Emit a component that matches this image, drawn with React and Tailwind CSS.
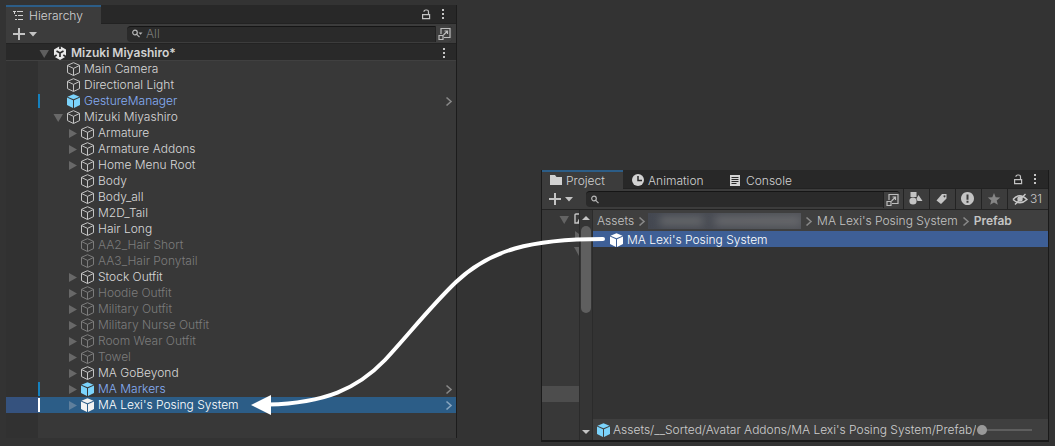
import React from "react";

const TREE = [
  { name: "Main Camera", depth: 0 },
  { name: "Directional Light", depth: 0 },
  { name: "GestureManager", depth: 0, prefab: true },
  { name: "Mizuki Miyashiro", depth: 0, fold: "open" },
  { name: "Armature", depth: 1, fold: "closed" },
  { name: "Armature Addons", depth: 1, fold: "closed" },
  { name: "Home Menu Root", depth: 1, fold: "closed" },
  { name: "Body", depth: 1 },
  { name: "Body_all", depth: 1 },
  { name: "M2D_Tail", depth: 1 },
  { name: "Hair Long", depth: 1 },
  { name: "AA2_Hair Short", depth: 1, off: true },
  { name: "AA3_Hair Ponytail", depth: 1, off: true },
  { name: "Stock Outfit", depth: 1, fold: "closed" },
  { name: "Hoodie Outfit", depth: 1, fold: "closed", off: true },
  { name: "Military Outfit", depth: 1, fold: "closed", off: true },
  { name: "Military Nurse Outfit", depth: 1, fold: "closed", off: true },
  { name: "Room Wear Outfit", depth: 1, fold: "closed", off: true },
  { name: "Towel", depth: 1, fold: "closed", off: true },
  { name: "MA GoBeyond", depth: 1, fold: "closed" },
  { name: "MA Markers", depth: 1, fold: "closed", prefab: true },
  { name: "MA Lexi's Posing System", depth: 1, fold: "closed", prefab: true, selected: true },
];

function Cube({ className = "" }) {
  return (
    <svg className={"size-4 shrink-0 " + className} viewBox="0 0 16 16" fill="none" stroke="currentColor" strokeWidth="1" strokeLinejoin="round" aria-hidden="true">
      <path d="M7.500 1.700 13.500 4.300V11.600L7.500 14.500 1.500 11.600V4.300Z" />
      <path d="M1.500 4.500 7.500 7.400 13.500 4.500M7.500 7.400V14.300" />
    </svg>
  );
}

function SolidCube({ className = "" }) {
  return (
    <svg className={"size-4 shrink-0 " + className} viewBox="0 0 16 16" fill="currentColor" aria-hidden="true">
      <path d="M7.500 1.200 13.500 3.700 7.500 6.300 1.500 3.700Z" />
      <path d="M1 4.600 7 7.200V14.900L1 12Z" />
      <path d="M14 4.600 8 7.200V14.900L14 12Z" />
    </svg>
  );
}

function Fold({ open, className = "" }) {
  return (
    <svg className={"h-4 w-3.5 shrink-0 " + className} viewBox="0 0 14 16" fill="currentColor" aria-hidden="true">
      {open ? <path d="M1.500 5h9.500L6.200 13Z" /> : <path d="M3 4v9l8-4.500Z" />}
    </svg>
  );
}

function Chevron({ className = "" }) {
  return (
    <svg className={"h-4 w-2 shrink-0 " + className} viewBox="0 0 8 16" fill="none" stroke="currentColor" strokeWidth="1.6" aria-hidden="true">
      <path d="M1.500 4.500 6 8.500 1.500 12.500" />
    </svg>
  );
}

function Lock() {
  return (
    <svg className="h-4 w-3" viewBox="0 0 12 16" fill="none" stroke="currentColor" strokeWidth="1.2" aria-hidden="true">
      <path d="M1.600 8.600h7v4h-7zM3 5.800V5.200Q3.200 4 4.700 4h1Q7.500 4 7.500 5.700V8.500" />
    </svg>
  );
}

function Dots() {
  return (
    <svg className="h-4 w-2" viewBox="0 0 8 16" fill="currentColor" aria-hidden="true">
      <path d="M3 3h2v2H3zM3 7h2v2H3zM3 11h2v2H3z" />
    </svg>
  );
}

function AddButton() {
  return (
    <button type="button" aria-label="Create" className="flex text-[#c4c4c4]">
      <svg className="h-4 w-7" viewBox="0 0 28 16" fill="currentColor" aria-hidden="true">
        <path d="M8 2h2v5h5v2h-5v5H8V9H3V7h5zM19 6h8l-4 4.500z" />
      </svg>
    </button>
  );
}

function SearchGlyph({ menu }) {
  return (
    <svg className="h-4 w-3 shrink-0 text-[#b8b8b8]" viewBox="0 0 12 16" fill="none" stroke="currentColor" strokeWidth="1.2" aria-hidden="true">
      <circle cx="4" cy="6.500" r="2.300" />
      <path d="M5.700 8.300 8.500 11.200" />
      {menu && <path d="M7.500 6.500h4L9.500 8.800Z" fill="currentColor" stroke="none" />}
    </svg>
  );
}

function OpenSearch() {
  return (
    <button type="button" aria-label="Open search window" className="flex h-4 w-[17px] items-center justify-end rounded-r-sm border-l border-[#222] bg-[#404040] text-[#bdbdbd]">
      <svg className="size-3.5" viewBox="0 0 14 14" fill="none" stroke="currentColor" strokeWidth="1.200" aria-hidden="true">
        <path d="M3 7V1.500h9v9H6M1 8.500h4v4h-4zM5.500 8l4-4M6.500 4h3v3" />
      </svg>
    </button>
  );
}

function Hierarchy() {
  return (
    <section className="flex flex-col border-r border-[#1c1c1c] bg-[#383838]">
      <header className="flex h-[19px] items-stretch border-b border-[#222] bg-[#282828]">
        <button type="button" className="-mb-px flex w-[95px] items-center gap-1.5 border-t-2 border-[#2c5d87] bg-[#3c3c3c] pl-[7px] text-[#d2d2d2]">
          <svg className="h-3 w-2.5" viewBox="0 0 10 12" fill="currentColor" aria-hidden="true">
            <path d="M0 1h3v1H0zM1 2h1v2H1zM4 1h6v1H4zM2 5h2v1H2zM5 5h5v1H5zM2 9h2v1H2zM5 9h5v1H5z" />
          </svg>
          Hierarchy
        </button>
        <div className="ml-auto flex items-center gap-1.5 pr-[9px] text-[#c4c4c4]">
          <button type="button" aria-label="Lock"><Lock /></button>
          <button type="button" aria-label="Panel menu"><Dots /></button>
        </div>
      </header>
      <div className="flex h-5 items-center justify-between border-b border-[#232323] bg-[#3c3c3c] pl-1 pr-1">
        <AddButton />
        <div className="flex h-4 w-[325px] items-center rounded-sm border-t border-[#151515] bg-[#2a2a2a] pl-1">
          <SearchGlyph menu />
          <input aria-label="Search hierarchy" placeholder="All" className="ml-[3px] w-0 grow bg-transparent text-xs outline-none placeholder:text-[#7c7c7c]" />
          <OpenSearch />
        </div>
      </div>
      <div className="flex h-[17px] items-center border-b border-[#404040] bg-[#292929] pl-8 pr-2 pt-px font-semibold text-[#d2d2d2]">
        <Fold open className="text-[#5e5e5e]" />
        <svg className="mr-[3px] size-4" viewBox="0 0 16 16" aria-hidden="true">
          <path d="M8 1 14 4.400V11.600L8 15 2 11.600V4.400Z" fill="#e8e8e8" />
          <path d="M8 8 4.500 6M8 8l3.500-2M8 8v4M8 .5v3.500M1.500 12l3.200-2M14.500 12l-3.200-2" stroke="#292929" strokeWidth="1.700" />
        </svg>
        <span>Mizuki Miyashiro*</span>
        <button type="button" aria-label="Scene menu" className="ml-auto text-[#c4c4c4]"><Dots /></button>
      </div>
      <ul className="text-[#d8d8d8]">
        {TREE.map((n) => (
          <li key={n.name} className={"flex h-4 items-center " + (n.selected ? "bg-[#2c5d87] text-white" : n.off ? "text-[#7c7c7c]" : n.prefab ? "text-[#86aef6]" : "")}>
            <span className={"h-4 w-8 " + (n.selected ? "bg-[#35527e]" : "bg-[#313131]")} />
            <span className={"h-3.5 w-0.5 " + (n.selected ? "bg-white" : n.prefab ? "bg-[#1580bd]" : "")} />
            <span className={n.depth ? "w-[26px]" : "w-3"} />
            {n.fold ? <Fold open={n.fold === "open"} className={n.selected ? "text-[#5f7f9c]" : "text-[#686868]"} /> : <span className="w-3.5" />}
            {n.prefab ? <SolidCube className={n.selected ? "text-[#f2f2f2]" : "text-[#7bd3fb]"} /> : <Cube className={n.off ? "" : "text-[#c4c4c4]"} />}
            <span className="ml-0.5 whitespace-nowrap">{n.name}</span>
            {n.prefab && <Chevron className={"ml-auto mr-[3px] " + (n.selected ? "text-[#88a5bf]" : "text-[#888]")} />}
          </li>
        ))}
      </ul>
      <div className="flex h-[25px]"><span className="w-8 bg-[#313131]" /></div>
    </section>
  );
}

function Tool({ label, children }) {
  return (
    <button type="button" aria-label={label} className="flex h-5 w-[26px] shrink-0 items-center justify-center border-l border-[#232323] pr-0.5 text-[#c4c4c4]">
      <svg className="size-4" viewBox="0 0 16 16" fill="currentColor" aria-hidden="true">{children}</svg>
    </button>
  );
}

function Project() {
  return (
    <section className="mt-[165px] flex h-[272px] min-w-0 flex-col border-x border-b-2 border-[#1a1a1a] bg-[#333]">
      <header className="flex h-[19px] shrink-0 items-stretch border-b border-[#222] bg-[#282828] text-[#d2d2d2]">
        <button type="button" className="-mb-px flex w-[81px] items-center gap-1 border-t-2 border-[#2c5d87] bg-[#3c3c3c] pl-2">
          <svg className="h-3 w-3" viewBox="0 0 12 12" fill="currentColor" aria-hidden="true"><path d="M0 0h5l1.500 2H12v8H0z" /></svg>
          Project
        </button>
        <button type="button" className="flex w-[98px] items-center gap-[3px] pl-2 pt-1">
          <svg className="h-3.5 w-3.5" viewBox="0 0 14 14" aria-hidden="true"><circle cx="7" cy="6" r="6" fill="currentColor" /><path d="M7 2V6.500h4" fill="none" stroke="#282828" strokeWidth="1.500" /></svg>
          Animation
        </button>
        <button type="button" className="flex items-center gap-[5px] pl-2 pt-1">
          <svg className="h-3 w-3" viewBox="0 0 12 12" aria-hidden="true"><path d="M1 0h10v11H1z" fill="currentColor" /><path d="M2.500 2.500h7M2.500 4.500h7M2.500 6.500h7M2.500 8.500h5" stroke="#282828" /></svg>
          Console
        </button>
        <div className="ml-auto flex items-center gap-1.5 pr-[9px] text-[#c4c4c4]">
          <button type="button" aria-label="Lock"><Lock /></button>
          <button type="button" aria-label="Panel menu"><Dots /></button>
        </div>
      </header>
      <div className="flex h-[21px] shrink-0 items-center border-b border-[#232323] bg-[#3c3c3c] pl-1">
        <AddButton />
        <div className="ml-3 mr-[3px] flex h-4 min-w-0 grow items-center rounded-sm border-t border-[#151515] bg-[#2a2a2a] pl-1">
          <SearchGlyph />
          <input aria-label="Search project" className="w-0 grow bg-transparent text-xs outline-none" />
          <OpenSearch />
        </div>
        <Tool label="Search by type"><path d="M2.500 1h6v5h-6zM10.500 4l4 6H9.500L8.500 7.500z" /><circle cx="5" cy="10" r="3.600" /></Tool>
        <Tool label="Search by label"><path fillRule="evenodd" d="M8 3h4.500v4.500L7 13 2.500 9.500ZM10.500 4.200a1 1 0 1 0 .01 0Z" /></Tool>
        <Tool label="Search by import log"><path fillRule="evenodd" d="M7.500 1a6.500 6.500 0 1 0 .01 0ZM6.500 3.500h2v5.200h-2zM6.500 9.800h2v2h-2z" /></Tool>
        <Tool label="Save search"><path fill="#858585" d="m8 2 1.700 4.200 4.500.3-3.500 2.900 1.200 4.400L8 11.400l-3.900 2.400 1.200-4.400L1.800 6.500l4.500-.3Z" /></Tool>
        <button type="button" aria-label="31 hidden packages" className="flex h-5 w-[41px] shrink-0 items-center gap-0.5 border-l border-[#232323] pl-1 text-[#c8c8c8]">
          <svg className="h-4 w-4 shrink-0" viewBox="0 0 16 16" fill="none" stroke="currentColor" strokeWidth="1.400" aria-hidden="true"><path d="M1 8.500Q7.500 1 15 8.500 8 15 1 8.500M3 13.500 13.500 3" /><circle cx="8" cy="8" r="2" fill="currentColor" /></svg>
          31
        </button>
      </div>
      <div className="flex min-h-0 grow">
        <div className="flex w-[37px] shrink-0 flex-col bg-[#383838] text-[#636363]">
          <div className="flex h-[18px] items-center overflow-hidden pl-4">
            <Fold open />
            <svg className="ml-0.5 h-4 w-2 shrink-0 text-[#c4c4c4]" viewBox="0 0 8 16" aria-hidden="true"><path d="M8 3H2Q1 3 1 4v8h7" fill="none" stroke="currentColor" strokeWidth="1.400" /><path d="M8 5H6l-3 7h5z" fill="currentColor" /></svg>
          </div>
          <div className="flex h-4 justify-end overflow-hidden"><svg className="h-4 w-1" viewBox="0 0 4 16" fill="currentColor" aria-hidden="true"><path d="M0 3l4 3v4L0 12z" /></svg></div>
          <div className="flex h-4 justify-end overflow-hidden"><svg className="h-4 w-[5px]" viewBox="0 0 5 16" fill="currentColor" aria-hidden="true"><path d="M0 3h5v9z" /></svg></div>
          <div className="mb-[38px] mt-auto h-4 bg-[#4d4d4d]" />
        </div>
        <div className="flex w-3.5 shrink-0 flex-col items-center justify-between border-l border-r border-[#2b2b2b] bg-[#353535] text-[#c4c4c4]" aria-hidden="true">
          <svg className="h-4 w-2 shrink-0" viewBox="0 0 8 16" fill="currentColor"><path d="M0 10h8L4 6z" /></svg>
          <span className="mb-auto h-[87px] w-2.5 rounded-full bg-[#5f5f5f]" />
          <svg className="h-4 w-2 shrink-0" viewBox="0 0 8 16" fill="currentColor"><path d="M0 6h8l-4 4z" /></svg>
        </div>
        <div className="flex min-w-0 grow flex-col">
          <nav aria-label="Folder path" className="flex h-[21px] shrink-0 items-center whitespace-nowrap bg-[#3f3f3f] pl-1 text-[#c4c4c4]">
            <a href="#assets">Assets</a>
            <Chevron className="ml-1 mr-0.5 text-[#888]" />
            <span className="flex h-4 w-[153px] shrink-0 items-center gap-3 overflow-hidden bg-linear-to-r from-[#444851] to-[#505258]">
              <span className="ml-3 h-2 w-12 bg-[#6a6c6e] blur-xs" />
              <span className="h-2 w-24 bg-[#6c6d70] blur-xs" />
            </span>
            <Chevron className="mx-1 text-[#888]" />
            <a href="#system">MA Lexi's Posing System</a>
            <Chevron className="mx-1 text-[#888]" />
            <a href="#prefab" className="font-semibold">Prefab</a>
          </nav>
          <div className="flex h-4 shrink-0 items-center bg-[#3e5f96] pl-4 pt-0.5 text-white">
            <SolidCube />
            <span className="ml-0.5">MA Lexi's Posing System</span>
          </div>
          <footer className="mt-auto flex h-[21px] items-center bg-[#3f3f3f] pl-[3px] pr-4 text-[#cecece]">
            <SolidCube className="text-[#7bd3fb]" />
            <span className="ml-px min-w-0 overflow-hidden whitespace-nowrap">Assets/__Sorted/Avatar Addons/MA Lexi's Posing System/Prefab/</span>
            <input type="range" aria-label="Icon size" defaultValue="0" className="ml-auto h-0.5 w-[55px] shrink-0 appearance-none bg-[#5e5e5e] [&::-webkit-slider-thumb]:size-2.5 [&::-webkit-slider-thumb]:appearance-none [&::-webkit-slider-thumb]:rounded-full [&::-webkit-slider-thumb]:bg-[#999]" />
          </footer>
        </div>
      </div>
    </section>
  );
}

export default function App() {
  return (
    <main className="relative min-h-screen bg-[#333] px-1.5 pb-1 pt-[5px] font-['Inter','Liberation_Sans',sans-serif] text-xs leading-4 font-light">
      <div className="grid grid-cols-[451fr_508fr] items-start gap-x-[84px]">
        <Hierarchy />
        <Project />
      </div>
      <svg className="pointer-events-none absolute left-0 top-0 h-[446px] w-full" viewBox="0 0 1055 446" preserveAspectRatio="none" aria-hidden="true">
        <path d="M603 239C530 239 490 250 456 282C430 307 410 333 385 360C357 389 325 403 268 404.500" fill="none" stroke="#fff" strokeWidth="4" strokeLinecap="round" />
        <path d="M251 405 271 395V415Z" fill="#fff" />
      </svg>
    </main>
  );
}
